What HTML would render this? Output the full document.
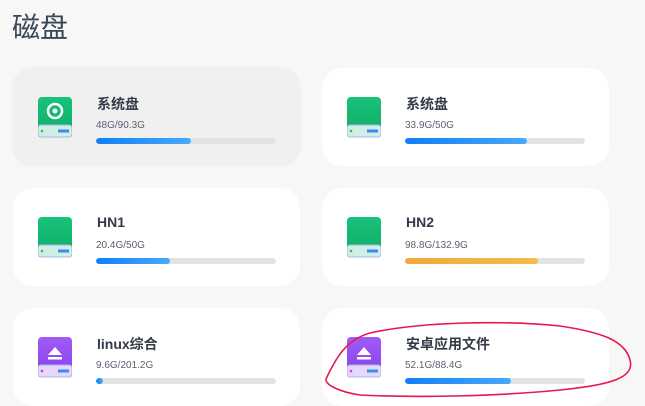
<!DOCTYPE html>
<html><head><meta charset="utf-8"><style>
body{margin:0;width:645px;height:404px;overflow:hidden;background:#f7f7f7;font-family:"Liberation Sans","Noto Sans CJK SC",sans-serif;position:relative}
h1{position:absolute;left:12px;top:6px;margin:0;font-size:28px;font-weight:400;color:#3b4656}
.card{position:absolute;width:287px;height:98px;background:#fff;border-radius:20px}
.card.g{background:#f0f0f0;box-shadow:0 0 2px #e6e6e6}
.ic{position:absolute;left:25px;top:29px;width:34px;height:41px}
.t{position:absolute;left:84px;top:26px;font-size:14px;font-weight:700;color:#333a48}
.s{position:absolute;left:83px;top:52px;font-size:10px;color:#5a6270}
.bar{position:absolute;left:83px;top:70px;width:180px;height:6px;border-radius:3px;background:#e3e3e3;overflow:hidden}
.bar i{display:block;height:100%;border-radius:3px;background:linear-gradient(90deg,#1080f5,#4aa8fb)}
</style></head><body>
<h1>磁盘</h1>
<svg width="0" height="0" style="position:absolute"><defs>
<linearGradient id="gg" x1="0" y1="0" x2="0" y2="1"><stop offset="0" stop-color="#18c27a"/><stop offset="1" stop-color="#10b069"/></linearGradient>
<linearGradient id="pg" x1="0" y1="0" x2="0" y2="1"><stop offset="0" stop-color="#a05cf5"/><stop offset="1" stop-color="#8a44ee"/></linearGradient>
</defs></svg>

<div class="card g" style="left:13px;top:68px">
<svg class="ic" viewBox="0 0 34 41"><rect x="0" y="0" width="34" height="34" rx="4" fill="url(#gg)"/><rect x="0" y="28" width="34" height="12" rx="3" fill="#cfeee6" stroke="#a9b8e0"/><circle cx="4" cy="34" r="1.3" fill="#3cc23c"/><rect x="20" y="32.5" width="11" height="3" fill="#3b8bf5"/><circle cx="17" cy="14" r="7" fill="none" stroke="#fff" stroke-width="2.5"/><circle cx="17" cy="14" r="2.5" fill="#fff"/></svg>
<div class="t">系统盘</div><div class="s">48G/90.3G</div><div class="bar"><i style="width:53%"></i></div></div>

<div class="card" style="left:322px;top:68px">
<svg class="ic" viewBox="0 0 34 41"><rect x="0" y="0" width="34" height="34" rx="4" fill="url(#gg)"/><rect x="0" y="28" width="34" height="12" rx="3" fill="#cfeee6" stroke="#a9b8e0"/><circle cx="4" cy="34" r="1.3" fill="#3cc23c"/><rect x="20" y="32.5" width="11" height="3" fill="#3b8bf5"/></svg>
<div class="t">系统盘</div><div class="s">33.9G/50G</div><div class="bar"><i style="width:68%"></i></div></div>

<div class="card" style="left:13px;top:188px">
<svg class="ic" viewBox="0 0 34 41"><rect x="0" y="0" width="34" height="34" rx="4" fill="url(#gg)"/><rect x="0" y="28" width="34" height="12" rx="3" fill="#cfeee6" stroke="#a9b8e0"/><circle cx="4" cy="34" r="1.3" fill="#3cc23c"/><rect x="20" y="32.5" width="11" height="3" fill="#3b8bf5"/></svg>
<div class="t">HN1</div><div class="s">20.4G/50G</div><div class="bar"><i style="width:41%"></i></div></div>

<div class="card" style="left:322px;top:188px">
<svg class="ic" viewBox="0 0 34 41"><rect x="0" y="0" width="34" height="34" rx="4" fill="url(#gg)"/><rect x="0" y="28" width="34" height="12" rx="3" fill="#cfeee6" stroke="#a9b8e0"/><circle cx="4" cy="34" r="1.3" fill="#3cc23c"/><rect x="20" y="32.5" width="11" height="3" fill="#3b8bf5"/></svg>
<div class="t">HN2</div><div class="s">98.8G/132.9G</div><div class="bar"><i style="width:74%;background:linear-gradient(90deg,#f2a93a,#f5bb4a)"></i></div></div>

<div class="card" style="left:13px;top:308px">
<svg class="ic" viewBox="0 0 34 41"><rect x="0" y="0" width="34" height="34" rx="4" fill="url(#pg)"/><rect x="0" y="28" width="34" height="12" rx="3" fill="#e6d8fb" stroke="#a9b8e0"/><circle cx="4" cy="34" r="1.3" fill="#c03cf0"/><rect x="20" y="32.5" width="11" height="3" fill="#3b8bf5"/><path d="M10 18 L17 10 L24 18 Z" fill="#fff"/><rect x="10" y="20" width="14" height="2.5" fill="#fff"/></svg>
<div class="t">linux综合</div><div class="s">9.6G/201.2G</div><div class="bar"><i style="width:4%"></i></div></div>

<div class="card" style="left:322px;top:308px">
<svg class="ic" viewBox="0 0 34 41"><rect x="0" y="0" width="34" height="34" rx="4" fill="url(#pg)"/><rect x="0" y="28" width="34" height="12" rx="3" fill="#e6d8fb" stroke="#a9b8e0"/><circle cx="4" cy="34" r="1.3" fill="#c03cf0"/><rect x="20" y="32.5" width="11" height="3" fill="#3b8bf5"/><path d="M10 18 L17 10 L24 18 Z" fill="#fff"/><rect x="10" y="20" width="14" height="2.5" fill="#fff"/></svg>
<div class="t">安卓应用文件</div><div class="s">52.1G/88.4G</div><div class="bar"><i style="width:59%"></i></div></div>

<svg style="position:absolute;left:0;top:0" width="645" height="404"><path d="M326 379 C335 360 345 340 370 333 C420 322 500 320 560 326 C600 332 625 340 630 360 C635 378 610 385 560 390 C500 396 420 398 360 395 C340 392 325 385 326 379" fill="none" stroke="#e8184a" stroke-width="1.6"/></svg>
</body></html>
